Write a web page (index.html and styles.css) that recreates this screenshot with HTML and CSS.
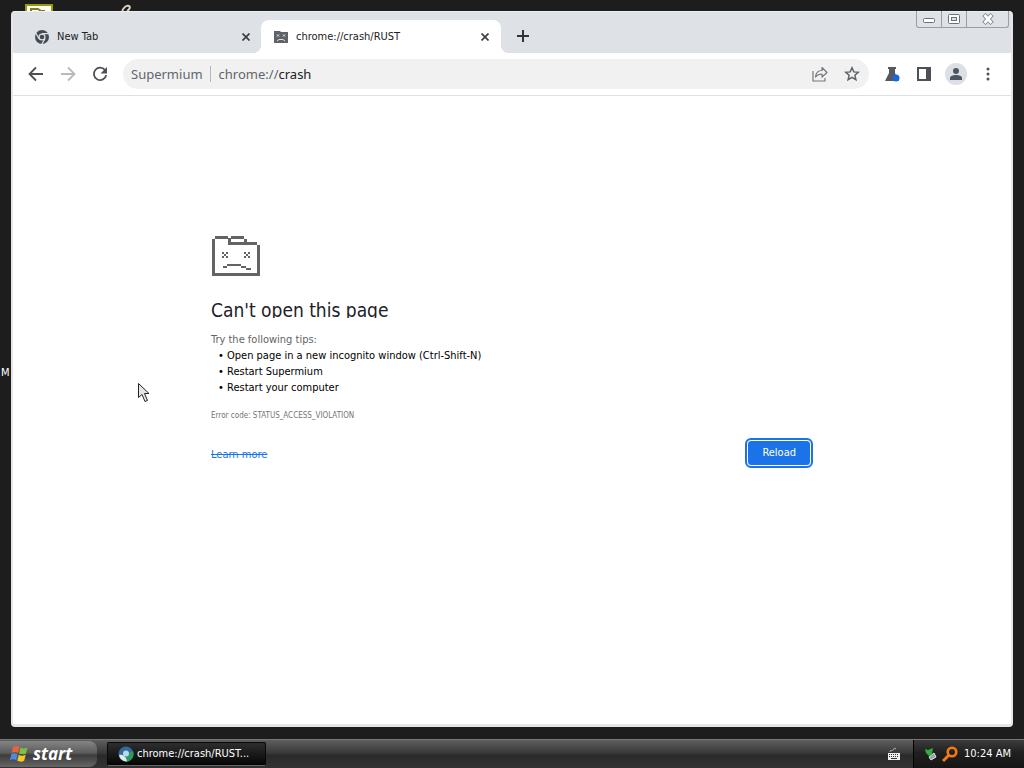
FILE: index.html
```html
<!DOCTYPE html>
<html lang="en">
<head>
    <meta charset="UTF-8">
    <meta name="viewport" content="width=device-width, initial-scale=1.0">
    <title>chrome://crash/RUST</title>
    <link rel="stylesheet" href="styles.css">
</head>
<body>
    <svg class="desk-icon desk-note" width="28" height="12" viewBox="0 0 28 12">
        <path fill="#8f9c10" d="M0 0h28v12H0z"/>
        <path fill="#fffef0" d="M2 2h24v10H2z"/>
        <path fill="none" stroke="#857a20" stroke-width="2" d="M6 7V5h7l3 2h4"/>
    </svg>
    <svg class="desk-icon desk-pen" width="12" height="8" viewBox="0 0 12 8">
        <path fill="none" stroke="#d8cfc0" stroke-width="2" d="M1 8c1-4 4-7 7-6 2 1 0 4-2 5"/>
    </svg>
    <span class="desk-label">M</span>

    <div class="window">
        <div class="tabs">
            <div class="tab">
                <svg class="favicon" width="16" height="16" viewBox="0 0 16 16">
                    <circle cx="8" cy="8" r="7" fill="#454b54"/>
                    <circle cx="8" cy="8" r="3.6" fill="#dee1e6"/>
                    <circle cx="8" cy="8" r="2.3" fill="#454b54"/>
                    <path stroke="#dee1e6" stroke-width="1.2" d="M8 4.6h7M5 9.7L1.6 3.8M11 9.7L7.5 15.6"/>
                </svg>
                <span class="tab-title">New Tab</span>
                <button class="tab-btn" aria-label="Close tab">
                    <svg width="8" height="8" viewBox="0 0 8 8"><path stroke="#3c4043" stroke-width="1.7" d="M.5.5l7 7M7.5.5l-7 7"/></svg>
                </button>
            </div>
            <div class="tab active">
                <svg class="favicon" width="16" height="16" viewBox="0 0 16 16">
                    <path fill="#5f6368" d="M1 2h6l1 1h7v11H1z"/>
                    <path fill="none" stroke="#fff" stroke-width=".8" d="M4 5.500l2 2M6 5.500l-2 2M10 5.500l2 2M12 5.500l-2 2M4 12l2-1.500h4l2 1.500"/>
                </svg>
                <span class="tab-title">chrome://crash/RUST</span>
                <button class="tab-btn" aria-label="Close tab">
                    <svg width="8" height="8" viewBox="0 0 8 8"><path stroke="#3c4043" stroke-width="1.7" d="M.5.5l7 7M7.5.5l-7 7"/></svg>
                </button>
            </div>
            <button class="tab-btn new-tab" aria-label="New tab">
                <svg width="12" height="12" viewBox="0 0 12 12"><path stroke="#30343a" stroke-width="2" d="M6 0v12M0 6h12"/></svg>
            </button>
            <div class="caption">
                <button aria-label="Minimize">
                    <svg width="14" height="12" viewBox="0 0 14 12"><rect x="1.500" y="5.500" width="11" height="4" rx="1" fill="#fff" stroke="#6b707b"/></svg>
                </button>
                <button aria-label="Maximize">
                    <svg width="14" height="12" viewBox="0 0 14 12"><rect x="1.500" y="1.500" width="11" height="9" rx="1" fill="#fff" stroke="#6b707b"/><rect x="4.500" y="4.500" width="5" height="3" fill="#dee1e6" stroke="#6b707b"/></svg>
                </button>
                <button class="wide" aria-label="Close">
                    <svg width="14" height="12" viewBox="0 0 14 12"><path stroke="#7b808a" stroke-width="4.500" d="M3 1.500l8 9M11 1.500l-8 9"/><path stroke="#fff" stroke-width="2.800" d="M3.500 2l7 8M10.500 2l-7 8"/></svg>
                </button>
            </div>
        </div>

        <div class="toolbar">
            <button aria-label="Back">
                <svg width="16" height="16" viewBox="0 0 16 16"><path fill="none" stroke="#4d5156" stroke-width="1.800" d="M15 8H2M8 1.500L1.500 8 8 14.500"/></svg>
            </button>
            <button aria-label="Forward">
                <svg width="16" height="16" viewBox="0 0 16 16"><path fill="none" stroke="#b8babd" stroke-width="1.800" d="M1 8h13M8 1.500L14.500 8 8 14.500"/></svg>
            </button>
            <button aria-label="Reload page">
                <svg width="16" height="16" viewBox="0 0 16 16"><path fill="none" stroke="#4d5156" stroke-width="1.800" d="M13.300 4.500A6.200 6.200 0 1 0 14.200 9"/><path fill="#4d5156" d="M15 1v6.500H8.500z"/></svg>
            </button>
            <div class="omnibox">
                <span class="chip">Supermium</span>
                <span class="url">chrome://<b>crash</b></span>
                <button aria-label="Share">
                    <svg width="18" height="18" viewBox="0 0 18 18"><path fill="none" stroke="#74787e" stroke-width="1.200" stroke-linejoin="round" d="M2 6v10h12v-3M4.500 12c.4-4.500 3-6.500 6.500-6.500V2.500L16 7.500l-5 4.500V9c-3 0-4.800.8-6.500 3z"/></svg>
                </button>
                <button aria-label="Bookmark">
                    <svg width="16" height="16" viewBox="0 0 16 16"><path fill="none" stroke="#5f6368" stroke-width="1.500" d="M8 1.800l1.800 4.100 4.500.4-3.400 3 1 4.400L8 11.400l-3.900 2.300 1-4.400-3.400-3 4.500-.4z"/></svg>
                </button>
            </div>
            <button aria-label="Experiments">
                <svg width="16" height="16" viewBox="0 0 16 16"><path fill="#555a60" d="M4 1h8v2h-1v4l4 8H1l4-8V3H4z"/><circle cx="12" cy="12" r="3.500" fill="#1a67e0"/></svg>
            </button>
            <button aria-label="Side panel">
                <svg width="16" height="16" viewBox="0 0 16 16"><path fill="#4d5156" fill-rule="evenodd" d="M1 1h14v14H1zM3 3v10h7V3z"/></svg>
            </button>
            <button aria-label="Profile">
                <svg width="22" height="22" viewBox="0 0 22 22"><circle cx="11" cy="11" r="11" fill="#dcdfe5"/><circle cx="11" cy="8" r="3" fill="#4d5560"/><path fill="#4d5560" d="M5 17v-2c0-2 3-3 6-3s6 1 6 3v2z"/></svg>
            </button>
            <button aria-label="Menu">
                <svg width="16" height="16" viewBox="0 0 16 16"><g fill="#4d5156"><circle cx="8" cy="3" r="1.500"/><circle cx="8" cy="8" r="1.500"/><circle cx="8" cy="13" r="1.500"/></g></svg>
            </button>
        </div>

        <div class="page">
            <div class="error">
                <svg class="sad-icon" width="49" height="40" viewBox="-1 0 49 40" shape-rendering="crispEdges">
                    <path fill="#636363" d="M3 0h13v3H3zM19 0h13v3H19zM0 3h3v34H0zM16 2h3v4h26v3H16zM32 3h3v3h-3zM45 9h3v28h-3zM0 37h48v3H0z"/>
                    <path fill="#636363" d="M10 16h2v2h-2zM14 16h2v2h-2zM12 18h2v2h-2zM10 20h2v2h-2zM14 20h2v2h-2zM32 16h2v2h-2zM36 16h2v2h-2zM34 18h2v2h-2zM32 20h2v2h-2zM36 20h2v2h-2zM11 30h4v2h-4zM15 28h14v2H15zM29 30h5v2h-5zM34 32h5v2h-5z"/>
                </svg>
                <h1>Can't open this page</h1>
                <p>Try the following tips:</p>
                <ul>
                    <li>Open page in a new incognito window (Ctrl-Shift-N)</li>
                    <li>Restart Supermium</li>
                    <li>Restart your computer</li>
                </ul>
                <div class="error-code">Error code: STATUS_ACCESS_VIOLATION</div>
                <div class="actions">
                    <a href="#">Learn more</a>
                    <button class="reload">Reload</button>
                </div>
            </div>
        </div>
    </div>

    <div class="taskbar">
        <button class="start">
            <svg width="20" height="20" viewBox="0 0 20 20">
                <path fill="#e8633a" d="M3 3c2-1.500 4-1.500 6.500 0L8 9C6 7.800 4 7.800 1.500 9z"/>
                <path fill="#7cc142" d="M10.500 3.500c2 1.200 4 1.200 7 0L16 9.500c-2.500 1.200-4.500 1-7 0z"/>
                <path fill="#4a8be0" d="M1.200 10.200c2.500-1.300 4.500-1.300 6.500 0l-1.500 6c-2-1.300-4-1.300-6.200 0z"/>
                <path fill="#f6c828" d="M8.700 10.800c2.300 1.200 4.500 1.200 7 0l-1.500 6c-2.500 1.200-4.700 1-7 0z"/>
            </svg>
            start
        </button>
        <button class="task">
            <svg width="16" height="16" viewBox="0 0 16 16">
                <circle cx="8" cy="8" r="7.500" fill="#356a9c"/>
                <path fill="#2f9a5c" d="M8 8l7-3a7.500 7.500 0 0 1-7 10.500z"/>
                <path fill="#e4ecea" d="M1 9c3-1 5 0 7 3l1 3.400A7.500 7.500 0 0 1 1 9z"/>
                <circle cx="8" cy="7.500" r="3" fill="#b6dcf2"/>
            </svg>
            chrome://crash/RUST...
        </button>
        <svg class="keyboard" width="14" height="14" viewBox="0 0 14 14">
            <path fill="none" stroke="#b8b8b8" d="M3 5c0-3 2 0 3-2s1-2 3-1"/>
            <path fill="#eee" d="M1 6h12v7H1z"/>
            <path stroke="#333" stroke-dasharray="1 1" d="M2 7.500h10M2 9.500h10"/>
            <path stroke="#333" d="M4 11.500h6"/>
        </svg>
        <div class="tray">
            <svg width="16" height="16" viewBox="0 0 16 16">
                <path fill="#9aa3a8" stroke="#dce2e4" d="M6 11l5-4 2 4-5 3z"/>
                <path fill="#2fae3a" d="M2 3l3 1 5-2-1 6-3 2-3-3z"/>
            </svg>
            <svg width="16" height="16" viewBox="0 0 16 16">
                <circle cx="10" cy="6" r="4.300" fill="none" stroke="#f57a14" stroke-width="2.600"/>
                <path stroke="#f57a14" stroke-width="3" d="M7 9l-6 6"/>
            </svg>
            <span class="clock">10:24 AM</span>
        </div>
    </div>

    <svg class="cursor" width="14" height="22" viewBox="0 0 14 22">
        <path fill="#e6e6e6" stroke="#222" d="M1.500 1.500v14l3.500-3 3 7 2.500-1-3-7H12z"/>
    </svg>
</body>
</html>
```

FILE: styles.css
```css
* {
    box-sizing: border-box;
}
body {
    margin: 0;
    height: 100vh;
    display: flex;
    flex-direction: column;
    background: #1d1d1d;
    font-family: "DejaVu Sans Condensed", "DejaVu Sans", sans-serif;
    font-size: 11px;
    line-height: 16px;
    color: #202124;
    overflow: hidden;
}
button {
    display: flex;
    align-items: center;
    justify-content: center;
    padding: 0;
    border: none;
    background: none;
    font: inherit;
    color: inherit;
}
svg {
    flex: none;
    display: block;
}

/* desktop */
.desk-icon {
    position: absolute;
    top: 4px;
}
.desk-note {
    left: 25px;
}
.desk-pen {
    left: 121px;
}
.desk-label {
    position: absolute;
    left: 1px;
    top: 365px;
    color: #fff;
}
.cursor {
    position: absolute;
    left: 137px;
    top: 382px;
}

/* browser window */
.window {
    position: relative;
    flex: 1;
    display: flex;
    flex-direction: column;
    margin: 11px 11px 12px;
    border: solid #e6e6e8;
    border-width: 0 2px 3px 2px;
    border-radius: 4px;
    background: #fff;
    overflow: hidden;
}
.tabs {
    display: flex;
    height: 42px;
    padding: 8px 0 0 8px;
    border-top: 1px solid #eceef0;
    background: #dee1e6;
}
.tab {
    display: flex;
    align-items: center;
    width: 240px;
    padding: 0 7px 0 13px;
}
.tab.active {
    position: relative;
    padding: 0 8px 0 12px;
    background: #fff;
    border-radius: 8px 8px 0 0;
}
.tab.active::before,
.tab.active::after {
    content: "";
    position: absolute;
    bottom: 0;
    width: 8px;
    height: 8px;
}
.tab.active::before {
    left: -8px;
    background: radial-gradient(circle at 0 0, transparent 8px, #fff 8px);
}
.tab.active::after {
    right: -8px;
    background: radial-gradient(circle at 8px 0, transparent 8px, #fff 8px);
}
.tab-title {
    flex: 1;
    margin-left: 7px;
}
.tab-btn {
    width: 16px;
    height: 32px;
}
.new-tab {
    margin-left: 14px;
}
.caption {
    position: absolute;
    top: 0;
    right: 2px;
    display: flex;
    border: 1px solid #9a9ea6;
    border-top: none;
    border-radius: 0 0 3px 3px;
}
.caption button {
    width: 25px;
    height: 16px;
    border-right: 1px solid #9a9ea6;
}
.caption .wide {
    width: 41px;
    border-right: none;
}
.toolbar {
    display: flex;
    align-items: center;
    gap: 8px;
    height: 43px;
    padding: 0 11px;
    border-bottom: 1px solid #dfe1e4;
}
.toolbar button {
    width: 24px;
    height: 24px;
}
.omnibox {
    flex: 1;
    display: flex;
    align-items: center;
    gap: 8px;
    height: 30px;
    margin: 0 3px;
    padding: 0 5px 0 8px;
    border-radius: 15px;
    background: #f1f1f2;
    font-family: "Noto Sans", sans-serif;
    font-size: 13px;
    color: #62666b;
}
.chip {
    padding-right: 7px;
    border-right: 1px solid #b4b7bb;
}
.url {
    flex: 1;
}
.url b {
    font-weight: 400;
    color: #202124;
}

/* error page */
.page {
    flex: 1;
    padding: 140px 16px 0;
}
.error {
    max-width: 602px;
    margin: 0 auto;
}
h1 {
    margin: 26px 0 14px;
    font-size: 19px;
    line-height: 16px;
    font-weight: 400;
    overflow: hidden;
}
p {
    margin: 0;
    color: #646464;
}
ul {
    margin: 0 0 12px;
    padding-left: 16px;
    list-style-type: "•\00a0";
    color: #000;
}
.error-code {
    font-size: 8px;
    color: #757575;
}
.actions {
    display: flex;
    align-items: center;
    justify-content: space-between;
    margin: 16px 2px 0 0;
}
.actions a {
    padding-top: 4px;
    color: #1a73e8;
    text-decoration: line-through;
}
.reload {
    height: 26px;
    padding: 0 14px;
    border: 1px solid #fff;
    border-radius: 4px;
    outline: 2px solid #1a73e8;
    background: #1a73e8;
    color: #fff;
}

/* taskbar */
.taskbar {
    display: flex;
    align-items: center;
    height: 29px;
    border-top: 1px solid #777;
    background: linear-gradient(#5e5e5e, #3a3a3a 45%, #2a2a2a 55%, #333);
    color: #fff;
}
.start {
    gap: 3px;
    justify-content: flex-start;
    width: 97px;
    height: 26px;
    padding-left: 10px;
    border-radius: 0 8px 8px 0;
    background: linear-gradient(#858585, #5c5c5c 45%, #3c3c3c 55%, #666);
    font-family: "Open Sans", sans-serif;
    font-size: 17px;
    font-weight: 700;
    font-style: italic;
}
.task {
    gap: 3px;
    justify-content: flex-start;
    width: 159px;
    height: 24px;
    margin-left: 10px;
    padding-left: 10px;
    border: 1px solid #080808;
    border-bottom-color: #666;
    border-radius: 2px;
    background: linear-gradient(#2e2e2e, #050505);
}
.keyboard {
    margin-left: auto;
    margin-right: 12px;
}
.tray {
    display: flex;
    align-items: center;
    gap: 3px;
    height: 100%;
    padding: 0 13px 0 9px;
    border-left: 1px solid #000;
    background: linear-gradient(#3c3c3c, #202020 45%, #151515);
}
.clock {
    margin-left: 3px;
}
```
